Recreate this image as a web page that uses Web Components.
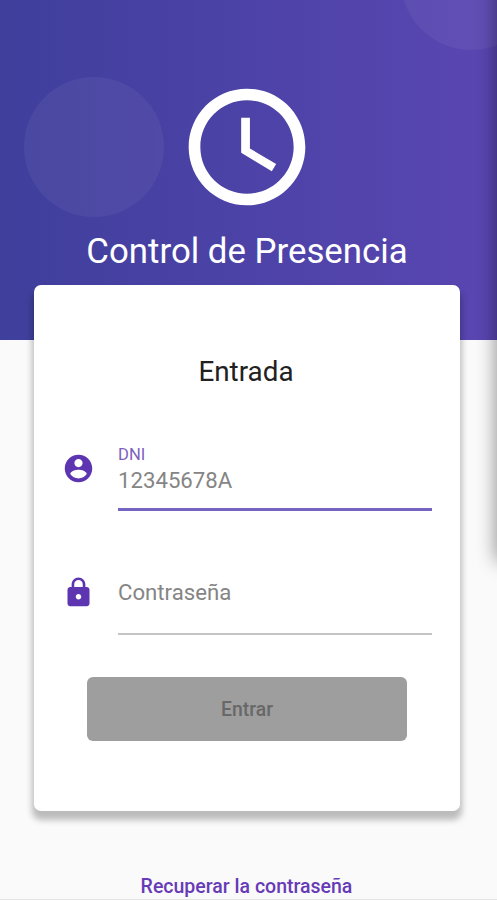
<!DOCTYPE html>
<html lang="es">
<head>
<meta charset="utf-8">
<title>Control de Presencia</title>
<style>
  body {
    margin: 0;
    font-family: Roboto, sans-serif;
  }
</style>
</head>
<body>
<login-page>
  <purple-header slot="header" title="Control de Presencia"></purple-header>
  <login-card title="Entrada">
    <form-field icon="account" label="DNI" placeholder="12345678A" active></form-field>
    <form-field icon="lock" placeholder="Contraseña"></form-field>
    <submit-button slot="action">Entrar</submit-button>
  </login-card>
  <text-link slot="footer">Recuperar la contraseña</text-link>
</login-page>

<script>
const icons = {
  clock: `<path d="M11.99 2C6.47 2 2 6.48 2 12s4.47 10 9.99 10C17.52 22 22 17.52 22 12S17.52 2 11.99 2zM12 20c-4.42 0-8-3.58-8-8s3.58-8 8-8 8 3.58 8 8-3.58 8-8 8zm.5-13H11v6l5.25 3.15.75-1.23-4.5-2.67z"/>`,
  account: `<path d="M12 2C6.48 2 2 6.48 2 12s4.48 10 10 10 10-4.48 10-10S17.52 2 12 2zm0 3c1.66 0 3 1.34 3 3s-1.34 3-3 3-3-1.34-3-3 1.34-3 3-3zm0 14.2c-2.5 0-4.71-1.28-6-3.22.03-1.99 4-3.08 6-3.08 1.99 0 5.97 1.09 6 3.08-1.29 1.94-3.5 3.22-6 3.22z"/>`,
  lock: `<path d="M18 8h-1V6c0-2.76-2.24-5-5-5S7 3.24 7 6v2H6c-1.1 0-2 .9-2 2v10c0 1.1.9 2 2 2h12c1.1 0 2-.9 2-2V10c0-1.1-.9-2-2-2zm-6 9c-1.1 0-2-.9-2-2s.9-2 2-2 2 .9 2 2-.9 2-2 2zm3.1-9H8.9V6c0-1.71 1.39-3.1 3.1-3.1s3.1 1.39 3.1 3.1v2z"/>`
};

class MdIcon extends HTMLElement {
  constructor() {
    super();
    this.attachShadow({ mode: 'open' });
  }

  connectedCallback() {
    this.shadowRoot.innerHTML = `
      <style>
        :host {
          display: block;
          width: 33px;
          height: 33px;
          flex: none;
        }
        svg {
          display: block;
          width: 100%;
          height: 100%;
          fill: currentColor;
        }
      </style>
      <svg viewBox="0 0 24 24">${icons[this.getAttribute('name')]}</svg>
    `;
  }
}

class LoginPage extends HTMLElement {
  constructor() {
    super();
    this.attachShadow({ mode: 'open' }).innerHTML = `
      <style>
        :host {
          position: relative;
          box-sizing: border-box;
          display: flex;
          flex-direction: column;
          height: 900px;
          overflow: hidden;
          background: #fafafa;
          border-bottom: 1px solid #e4e4e4;
        }
        main {
          position: relative;
          margin: -55px 37px 0 34px;
        }
        footer {
          display: flex;
          justify-content: center;
          margin: 64px 4px 0 0;
        }
        /* shadow of the sheet waiting past the right edge */
        .edge {
          position: absolute;
          top: -40px;
          left: 100%;
          width: 40px;
          height: 600px;
          box-shadow: 0 0 19px 1px rgba(0, 0, 0, 0.42);
        }
      </style>
      <slot name="header"></slot>
      <main><slot></slot></main>
      <footer><slot name="footer"></slot></footer>
      <div class="edge"></div>
    `;
  }
}

class PurpleHeader extends HTMLElement {
  constructor() {
    super();
    this.attachShadow({ mode: 'open' });
  }

  connectedCallback() {
    this.shadowRoot.innerHTML = `
      <style>
        :host {
          position: relative;
          box-sizing: border-box;
          display: flex;
          flex-direction: column;
          align-items: center;
          height: 340px;
          padding: 77px 3px 0 0;
          overflow: hidden;
          color: #fff;
          background: linear-gradient(to right, #3f3f9c, #5a46b2);
        }
        md-icon {
          position: relative;
          width: 140px;
          height: 140px;
        }
        h1 {
          position: relative;
          margin: 14px 0 0;
          font-size: 34.8px;
          font-weight: 400;
          line-height: 41px;
          white-space: nowrap;
        }
        .bubble {
          position: absolute;
          width: 140px;
          height: 140px;
          border-radius: 50%;
          background: rgba(255, 255, 255, 0.05);
        }
        .left { top: 77px; left: 24px; }
        .right { top: -90px; left: 401px; }
      </style>
      <div class="bubble left"></div>
      <div class="bubble right"></div>
      <md-icon name="clock"></md-icon>
      <h1>${this.getAttribute('title')}</h1>
    `;
  }
}

class LoginCard extends HTMLElement {
  constructor() {
    super();
    this.attachShadow({ mode: 'open' });
  }

  connectedCallback() {
    this.shadowRoot.innerHTML = `
      <style>
        :host {
          box-sizing: border-box;
          display: flex;
          flex-direction: column;
          height: 526px;
          padding: 70px 28px 0;
          border-radius: 7px;
          background: #fff;
          box-shadow: 0 7px 6px 2px rgba(0, 0, 0, 0.25);
        }
        h2 {
          margin: 0 2px 54px 0;
          font-size: 27.8px;
          font-weight: 400;
          line-height: 33px;
          text-align: center;
          color: #212121;
        }
        .fields {
          display: flex;
          flex-direction: column;
          gap: 55px;
        }
        .action {
          display: flex;
          justify-content: center;
          margin-top: 42px;
        }
      </style>
      <h2>${this.getAttribute('title')}</h2>
      <div class="fields"><slot></slot></div>
      <div class="action"><slot name="action"></slot></div>
    `;
  }
}

class FormField extends HTMLElement {
  constructor() {
    super();
    this.attachShadow({ mode: 'open' });
  }

  connectedCallback() {
    const label = this.getAttribute('label') || '';
    this.shadowRoot.innerHTML = `
      <style>
        :host {
          display: flex;
          gap: 23px;
          height: 69px;
        }
        md-icon {
          margin-top: 10px;
          color: #5e35b1;
        }
        .input {
          box-sizing: border-box;
          flex: 1;
          display: flex;
          flex-direction: column;
          border-bottom: 2px solid #c4c4c4;
        }
        label {
          height: 25px;
          margin-top: 3px;
          font-size: 16.6px;
          line-height: 20px;
          color: #7e5fc0;
        }
        span {
          margin-top: -3px;
          font-size: 22.2px;
          line-height: 26px;
          color: #858585;
        }
        :host([active]) .input {
          border-bottom: 3px solid #7664c2;
        }
        :host(:not([active])) label {
          height: 13px;
        }
      </style>
      <md-icon name="${this.getAttribute('icon')}"></md-icon>
      <div class="input">
        <label>${label}</label>
        <span>${this.getAttribute('placeholder')}</span>
      </div>
    `;
  }
}

class SubmitButton extends HTMLElement {
  constructor() {
    super();
    this.attachShadow({ mode: 'open' }).innerHTML = `
      <style>
        :host {
          display: block;
        }
        button {
          display: block;
          width: 320px;
          height: 64px;
          padding: 0;
          border: 0;
          border-radius: 6px;
          background: #9e9e9e;
          color: #686868;
          font: 500 19.4px Roboto, sans-serif;
        }
      </style>
      <button disabled><slot></slot></button>
    `;
  }
}

class TextLink extends HTMLElement {
  constructor() {
    super();
    this.attachShadow({ mode: 'open' }).innerHTML = `
      <style>
        :host {
          display: block;
          color: #673ab7;
          font-size: 19.5px;
          font-weight: 500;
          line-height: 24px;
        }
      </style>
      <slot></slot>
    `;
  }
}

customElements.define('md-icon', MdIcon);
customElements.define('login-page', LoginPage);
customElements.define('purple-header', PurpleHeader);
customElements.define('login-card', LoginCard);
customElements.define('form-field', FormField);
customElements.define('submit-button', SubmitButton);
customElements.define('text-link', TextLink);
</script>
</body>
</html>
